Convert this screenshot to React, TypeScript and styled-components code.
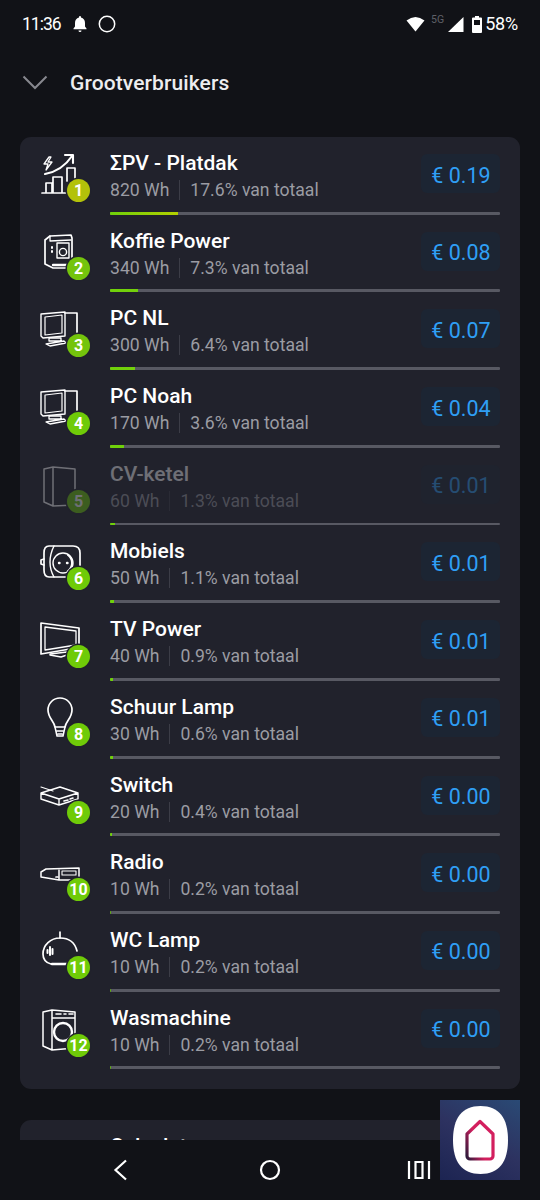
import React from 'react';
import styled, { createGlobalStyle } from 'styled-components';

const GlobalStyle = createGlobalStyle`
  html, body {
    margin: 0;
    padding: 0;
    background: #111217;
  }
  * {
    box-sizing: border-box;
  }
`

const Page = styled.div`
  position: relative;
  width: 540px;
  height: 1200px;
  background: #111217;
  display: flex;
  flex-direction: column;
  overflow: hidden;
  font-family: Roboto, "Liberation Sans", sans-serif;
  color: #fff;
`
const StatusBar = styled.div`
  height: 48px;
  flex: none;
  display: flex;
  align-items: center;
  justify-content: space-between;
  padding: 0 22px 0 22px;
`
const StatusGroup = styled.div`
  display: flex;
  align-items: center;
`
const Clock = styled.span`
  width: 35px;
  font-size: 17.5px;
  line-height: 20px;
  letter-spacing: -1px;
  white-space: nowrap;
`
const Battery = styled.span`
  margin-left: 3px;
  font-size: 18px;
  line-height: 20px;
  letter-spacing: -0.2px;
`
const StatusIcon = styled.svg<{ $gap?: number }>`
  display: block;
  flex: none;
  margin-left: ${p => p.$gap ?? 0}px;
`
const NetLabel = styled.span`
  margin: 0 4px 8px 6px;
  font-size: 10.5px;
  line-height: 12px;
  color: #5f6068;
`
const Header = styled.div`
  height: 70px;
  flex: none;
  display: flex;
  align-items: center;
  padding: 0 0 1px 22px;
  gap: 22px;
`
const Heading = styled.h1`
  margin: 0;
  font-size: 21px;
  font-weight: 500;
  letter-spacing: 0.1px;
  color: #ededef;
`
const Scroll = styled.div`
  flex: 1;
  min-height: 0;
  overflow: hidden;
  padding: 19px 20px 0;
  display: flex;
  flex-direction: column;
  gap: 31px;
`
const Card = styled.section`
  flex: none;
  background: #21222c;
  border-radius: 11px;
  padding: 0 20px;
`
const CardList = styled(Card)`
  height: 952px;
  display: flex;
  flex-direction: column;
`
const NextCard = styled(Card)`
  height: 60px;
  padding: 14px 0 0 90px;
  font-size: 21px;
  font-weight: 500;
`
const Row = styled.div`
  height: 77.7px;
  flex: none;
  display: flex;
  padding-top: 13px;
`
const IconSlot = styled.div<{ $dim?: boolean }>`
  position: relative;
  width: 70px;
  flex: none;
  height: 52px;
  opacity: ${p => (p.$dim ? 0.35 : 1)};
`
const IconArt = styled.svg`
  display: block;
  width: 52px;
  height: 52px;
  fill: none;
  stroke: #fff;
  stroke-width: 1.7;
  stroke-linejoin: round;
  stroke-linecap: round;
`
const Rank = styled.span<{ $color: string }>`
  position: absolute;
  left: 27px;
  top: 29px;
  width: 23px;
  height: 23px;
  border-radius: 50%;
  background: ${p => p.$color};
  box-shadow: 0 0 0 1.5px #21222c;
  color: #fff;
  font-size: 16px;
  font-weight: 700;
  display: flex;
  align-items: center;
  justify-content: center;
`
const Main = styled.div`
  flex: 1;
  min-width: 0;
  display: flex;
  flex-direction: column;
`
const Top = styled.div<{ $dim?: boolean }>`
  display: flex;
  justify-content: space-between;
  height: 55px;
  opacity: ${p => (p.$dim ? 0.35 : 1)};
`
const Name = styled.div`
  font-size: 21px;
  font-weight: 500;
  line-height: 26px;
`
const Stats = styled.div`
  display: flex;
  align-items: center;
  font-size: 17.6px;
  line-height: 24px;
  margin-top: 2px;
  color: #9b9ca3;
`
const Divider = styled.span`
  width: 1px;
  height: 20px;
  background: #3c3d47;
  margin: 0 10px;
`
const Cost = styled.div`
  width: 79px;
  height: 39px;
  margin-top: 4px;
  padding: 3px 0 0 1px;
  border-radius: 6px;
  background: #1c2533;
  color: #2f9ff5;
  font-size: 21.5px;
  display: flex;
  align-items: center;
  justify-content: center;
`
const Track = styled.div`
  height: 3px;
  background: #585963;
  margin-top: 8px;
  border-radius: 1px;
  overflow: hidden;
`
const Fill = styled.div<{ $end: string }>`
  height: 100%;
  background: linear-gradient(90deg, #6fd10a, ${p => p.$end});
`
const NavBar = styled.nav`
  height: 60px;
  flex: none;
  background: #111217;
  display: flex;
  align-items: center;
  padding-left: 46.5px;
`
const NavItem = styled.div`
  width: 149px;
  display: flex;
  justify-content: center;
`
const NavIcon = styled.svg`
  display: block;
  width: 24px;
  height: 24px;
  fill: none;
  stroke: #fff;
  stroke-width: 2.2;
`
const FloatTile = styled.div`
  position: absolute;
  left: 440px;
  top: 1100px;
  width: 80px;
  height: 80px;
  background: linear-gradient(30deg, #1c2452 0%, #2d3260 50%, #2a4a75 100%);
  display: flex;
  align-items: center;
  justify-content: center;
`

const Solar = () => (
  <IconArt viewBox="0 0 52 52">
    <path d="M2 43h24M6 42v-9h6v9M13 42v-15h9v15M27 31v-13h8v13" />
    <path d="M5 24c11-2 21-9 27-18M25 5h8v8" strokeWidth="2.1" />
    <path d="M9 7l-5 7h4l-2 6 6-8h-4l3-5z" strokeWidth="1.3" />
  </IconArt>
)
const Coffee = () => (
  <IconArt viewBox="0 0 52 52">
    <path d="M5 12l5-4 21-1 1 3v28M5 12v24l8 4h17" />
    <path d="M10 13l21-1M10 8v5" strokeWidth="1.3" />
    <rect x="17" y="15" width="12" height="15" strokeWidth="1.4" />
    <circle cx="23" cy="24" r="3.600" strokeWidth="1.4" />
    <path d="M12 19v1M12 23v1" strokeWidth="2" />
    <path d="M13 37h17" strokeWidth="2.4" />
  </IconArt>
)
const Computer = () => (
  <IconArt viewBox="0 0 52 52">
    <path d="M1 9l24-2v24L3 33l-2-2z" strokeWidth="1.4" />
    <path d="M5 12l17-2v18L5 30z" strokeWidth="1.2" />
    <path d="M25 8h12v20" />
    <path d="M9 33h12v3H9zM6 39l18-3 2 2-16 3z" strokeWidth="1.3" />
  </IconArt>
)
const Boiler = () => (
  <IconArt viewBox="0 0 52 52">
    <path d="M4 8l9-2 22 2v36l-22 1-9-4zM13 6v39" strokeWidth="1.5" />
  </IconArt>
)
const Plug = () => (
  <IconArt viewBox="0 0 52 52">
    <path d="M9 8h24q7 0 7 7v17q0 7-7 7h-24q-5 0-5-7v-17q0-7 5-7z" />
    <path d="M4 21l-3 1v4l3 1" />
    <path d="M14 8q-4 8-4 16t4 15" strokeWidth="1.4" />
    <circle cx="23" cy="25" r="10" strokeWidth="1.400" />
    <path d="M28 17a10 10 0 0 1 0 16" strokeWidth="2" />
    <path d="M19 25h.5M27 25h.5" strokeWidth="2.400" />
  </IconArt>
)
const Tv = () => (
  <IconArt viewBox="0 0 52 52">
    <path d="M1 7l38 5v18l-3 2-35 6z" />
    <path d="M5 11l31 4v14L5 34z" strokeWidth="1.300" />
    <path d="M10 38l17-2v3l-6 2-11-2z" strokeWidth="1.400" />
  </IconArt>
)
const Bulb = () => (
  <IconArt viewBox="0 0 52 52">
    <path d="M15 33c-1-6-7-9-7-17a12 12 0 0 1 24 0c0 8-6 11-7 17z" />
    <path d="M15 33l2 9h6l2-9M17 37h6M18 40h4" strokeWidth="1.500" />
  </IconArt>
)
const SwitchBox = () => (
  <IconArt viewBox="0 0 52 52">
    <path d="M1 21l19-6 18 6-19 6zM1 21v6l18 6 19-6v-6M19 27v6" strokeWidth="1.400" />
    <path d="M1 15l12 4" strokeWidth="1.200" />
    <path d="M24 29l4-1M30 27l3-1" strokeWidth="1.600" />
  </IconArt>
)
const RadioBox = () => (
  <IconArt viewBox="0 0 52 52">
    <path d="M6 20l33-1v9l-2 3H19L1 28v-5zM19 20v11" strokeWidth="1.500" />
    <rect x="22" y="22" width="14" height="4" strokeWidth="1.100" />
    <path d="M16 28h2" />
  </IconArt>
)
const Pendant = () => (
  <IconArt viewBox="0 0 52 52">
    <path d="M20 5v6M20 11a17 16 0 0 0-17 16q0 8 8 10" />
    <path d="M20 11c9 0 15 5 17 13" />
    <path d="M10 20v8M7.500 23v3M12.500 22v5" strokeWidth="2" />
    <path d="M12 37h18" strokeWidth="2.600" />
  </IconArt>
)
const Washer = () => (
  <IconArt viewBox="0 0 52 52">
    <path d="M3 7l9-2 23 2v36l-23 2-9-4zM12 5v40M12 13h23" strokeWidth="1.500" />
    <circle cx="23" cy="27" r="9" strokeWidth="2.400" />
    <path d="M16 9h5M24 9h2M29 9h4" strokeWidth="1.600" />
  </IconArt>
)

const items = [
  { name: 'ΣPV - Platdak', wh: '820 Wh', pct: '17.6% van totaal', cost: '€ 0.19', fill: 68, color: '#b3c20a', end: '#b3d000', Icon: Solar },
  { name: 'Koffie Power', wh: '340 Wh', pct: '7.3% van totaal', cost: '€ 0.08', fill: 28, color: '#74c40c', end: '#74d00c', Icon: Coffee },
  { name: 'PC NL', wh: '300 Wh', pct: '6.4% van totaal', cost: '€ 0.07', fill: 25, color: '#74c40c', end: '#74d00c', Icon: Computer },
  { name: 'PC Noah', wh: '170 Wh', pct: '3.6% van totaal', cost: '€ 0.04', fill: 14, color: '#6fcb08', end: '#6fd10a', Icon: Computer },
  { name: 'CV-ketel', wh: '60 Wh', pct: '1.3% van totaal', cost: '€ 0.01', fill: 5, color: '#6fcb08', end: '#6fd10a', Icon: Boiler, dim: true },
  { name: 'Mobiels', wh: '50 Wh', pct: '1.1% van totaal', cost: '€ 0.01', fill: 4, color: '#6fcb08', end: '#6fd10a', Icon: Plug },
  { name: 'TV Power', wh: '40 Wh', pct: '0.9% van totaal', cost: '€ 0.01', fill: 3, color: '#6fcb08', end: '#6fd10a', Icon: Tv },
  { name: 'Schuur Lamp', wh: '30 Wh', pct: '0.6% van totaal', cost: '€ 0.01', fill: 2.500, color: '#6fcb08', end: '#6fd10a', Icon: Bulb },
  { name: 'Switch', wh: '20 Wh', pct: '0.4% van totaal', cost: '€ 0.00', fill: 1.500, color: '#6fcb08', end: '#6fd10a', Icon: SwitchBox },
  { name: 'Radio', wh: '10 Wh', pct: '0.2% van totaal', cost: '€ 0.00', fill: 1, color: '#6fcb08', end: '#4f8a12', Icon: RadioBox },
  { name: 'WC Lamp', wh: '10 Wh', pct: '0.2% van totaal', cost: '€ 0.00', fill: 1, color: '#6fcb08', end: '#4f8a12', Icon: Pendant },
  { name: 'Wasmachine', wh: '10 Wh', pct: '0.2% van totaal', cost: '€ 0.00', fill: 1, color: '#6fcb08', end: '#4f8a12', Icon: Washer },
]

export default function App() {
  return (
    <Page>
      <GlobalStyle />
      <StatusBar>
        <StatusGroup>
          <Clock>11:36</Clock>
          <StatusIcon $gap={15} width="16" height="18" viewBox="0 0 16 18">
            <path d="M8 1a1 1 0 0 1 1 1v.6c2.600.6 4 2.600 4 5.400v3.500l1.500 2v.7h-13v-.7l1.500-2V8c0-2.800 1.400-4.800 4-5.400V2a1 1 0 0 1 1-1zM6.500 15.500h3a1.500 1.500 0 0 1-3 0z" fill="#fff" />
          </StatusIcon>
          <StatusIcon $gap={10} width="18" height="18" viewBox="0 0 18 18">
            <circle cx="9" cy="9" r="7.700" fill="none" stroke="#fff" strokeWidth="1.500" />
          </StatusIcon>
        </StatusGroup>
        <StatusGroup>
          <StatusIcon width="19" height="16" viewBox="0 0 19 16">
            <path d="M0.500 4.500Q9.500-2.500 18.500 4.500L9.500 15.500z" fill="#fff" />
          </StatusIcon>
          <NetLabel>5G</NetLabel>
          <StatusIcon width="16" height="16" viewBox="0 0 16 16">
            <path d="M15.500 1v15H0z" fill="#fff" />
          </StatusIcon>
          <StatusIcon $gap={8} width="10" height="17" viewBox="0 0 10 17">
            <path d="M3 0h4v1.500h2a1 1 0 0 1 1 1V16a1 1 0 0 1-1 1H1a1 1 0 0 1-1-1V2.500a1 1 0 0 1 1-1h2zM2 4v5h6V4z" fill="#fff" fillRule="evenodd" />
          </StatusIcon>
          <Battery>58%</Battery>
        </StatusGroup>
      </StatusBar>
      <Header>
        <svg width="26" height="15" viewBox="0 0 26 15">
          <path d="M1.500 1.500L13 13 24.500 1.500" fill="none" stroke="#87888f" strokeWidth="2" />
        </svg>
        <Heading>Grootverbruikers</Heading>
      </Header>
      <Scroll>
        <CardList>
          {items.map((item, i) => (
            <Row key={item.name}>
              <IconSlot $dim={item.dim}>
                <item.Icon />
                <Rank $color={item.color}>{i + 1}</Rank>
              </IconSlot>
              <Main>
                <Top $dim={item.dim}>
                  <div>
                    <Name>{item.name}</Name>
                    <Stats>
                      {item.wh}
                      <Divider />
                      {item.pct}
                    </Stats>
                  </div>
                  <Cost>{item.cost}</Cost>
                </Top>
                <Track>
                  <Fill $end={item.end} style={{ width: `${item.fill}px` }} />
                </Track>
              </Main>
            </Row>
          ))}
        </CardList>
        <NextCard>Calculator</NextCard>
      </Scroll>
      <NavBar>
        <NavItem>
          <NavIcon viewBox="0 0 24 24"><path d="M17 2.500L6.500 12 17 21.500" /></NavIcon>
        </NavItem>
        <NavItem>
          <NavIcon viewBox="0 0 24 24"><circle cx="12" cy="12" r="9" /></NavIcon>
        </NavItem>
        <NavItem>
          <NavIcon viewBox="0 0 24 24"><path d="M2 3v18M22 3v18M8.500 4h7v16h-7z" /></NavIcon>
        </NavItem>
      </NavBar>
      <FloatTile>
        <svg width="55" height="68" viewBox="0 0 55 68">
          <defs>
            <linearGradient id="houseStroke" x1="0" y1="1" x2="1" y2="0.400">
              <stop offset="0" stopColor="#2a1a3a" />
              <stop offset="0.500" stopColor="#d31f5e" />
              <stop offset="1" stopColor="#d31f5e" />
            </linearGradient>
          </defs>
          <path d="M27.500 0C46 0 55 12 55 34S46 68 27.500 68 0 56 0 34 9 0 27.500 0z" fill="#fff" />
          <path d="M27 15.500L40 28v22a3 3 0 0 1-3 3H17a3 3 0 0 1-3-3V28z" fill="none" stroke="url(#houseStroke)" strokeWidth="3.200" strokeLinejoin="round" />
        </svg>
      </FloatTile>
    </Page>
  )
}
